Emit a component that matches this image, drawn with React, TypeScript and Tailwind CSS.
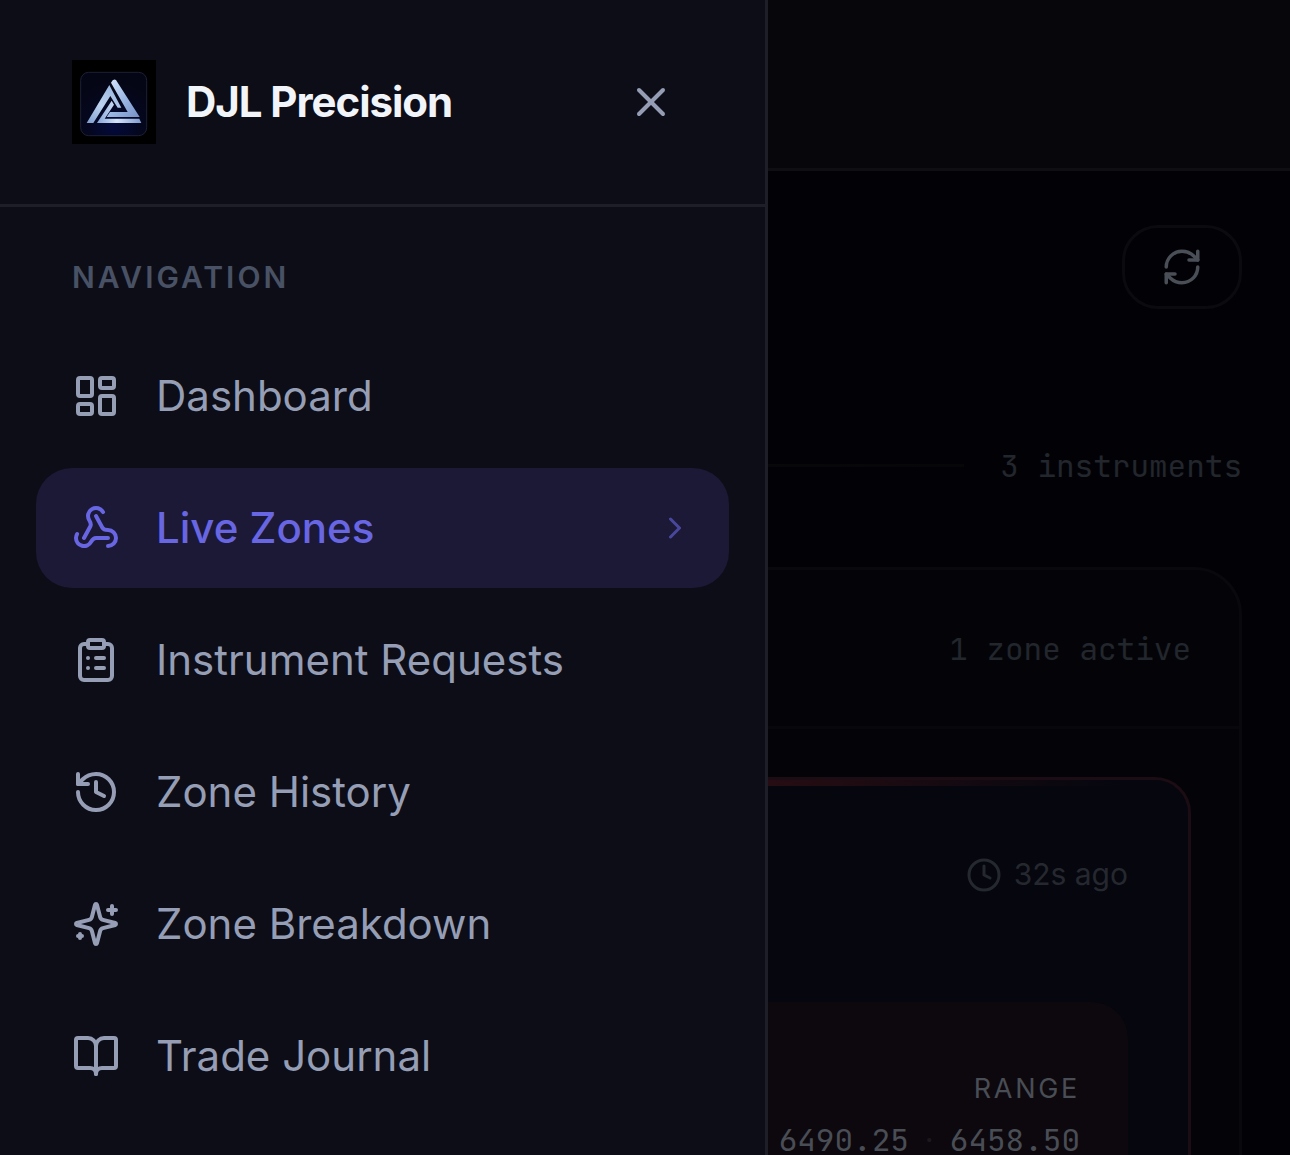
import {
  BookOpen,
  ChevronRight,
  ClipboardList,
  Clock,
  History,
  LayoutDashboard,
  RefreshCw,
  Webhook,
  X,
  type LucideIcon,
} from "lucide-react";

function LogoMark() {
  return (
    <svg viewBox="0 0 252 252" className="size-21 shrink-0" role="img" aria-label="DJL Precision logo">
      <defs>
        <radialGradient id="tile" cx="0.5" cy="0.85" r="0.7">
          <stop offset="0" stopColor="#030a3c" />
          <stop offset="0.55" stopColor="#05071f" />
          <stop offset="1" stopColor="#050615" />
        </radialGradient>
        <linearGradient id="left" x1="0" y1="1" x2="0.7" y2="0">
          <stop offset="0" stopColor="#7f9dcd" />
          <stop offset="0.5" stopColor="#bdd3f0" />
          <stop offset="1" stopColor="#9ab6e0" />
        </linearGradient>
        <linearGradient id="right" x1="0" y1="0" x2="1" y2="1">
          <stop offset="0" stopColor="#dbe9fb" />
          <stop offset="0.5" stopColor="#9dbae6" />
          <stop offset="1" stopColor="#7690c4" />
        </linearGradient>
        <linearGradient id="base" x1="0" y1="0" x2="1" y2="0">
          <stop offset="0" stopColor="#86a4d6" />
          <stop offset="0.45" stopColor="#d3e3fa" />
          <stop offset="1" stopColor="#7e9acf" />
        </linearGradient>
      </defs>
      <rect width="252" height="252" fill="#000" />
      <rect x="26" y="37" width="198" height="190" rx="24" fill="url(#tile)" stroke="#1d2036" strokeWidth="3" />
      <path d="M112 75 44 189H64L115 108 137 143H148Z" fill="url(#left)" />
      <path d="M117 68Q124 54 132 60L203 171H104L114 156H167Z" fill="url(#right)" />
      <path d="M119 122 75 189H208L202 176H98L126 134Z" fill="url(#base)" />
    </svg>
  );
}

function SparklesIcon({ className }: { className?: string }) {
  return (
    <svg
      viewBox="0 0 24 24"
      fill="none"
      stroke="currentColor"
      strokeWidth="2"
      strokeLinecap="round"
      strokeLinejoin="round"
      className={className}
      aria-hidden="true"
    >
      <path d="M9.937 15.5A2 2 0 0 0 8.5 14.063l-6.135-1.582a.5.5 0 0 1 0-.962L8.5 9.936A2 2 0 0 0 9.937 8.5l1.582-6.135a.5.5 0 0 1 .963 0L14.063 8.5A2 2 0 0 0 15.5 9.937l6.135 1.581a.5.5 0 0 1 0 .964L15.5 14.063a2 2 0 0 0-1.437 1.437l-1.582 6.135a.5.5 0 0 1-.963 0z" />
      <path d="M20 3v4M22 5h-4M4 17v2M5 18H3" />
    </svg>
  );
}

type NavItem = { label: string; icon: LucideIcon | typeof SparklesIcon; active?: boolean };

const navItems: NavItem[] = [
  { label: "Dashboard", icon: LayoutDashboard },
  { label: "Live Zones", icon: Webhook, active: true },
  { label: "Instrument Requests", icon: ClipboardList },
  { label: "Zone History", icon: History },
  { label: "Zone Breakdown", icon: SparklesIcon },
  { label: "Trade Journal", icon: BookOpen },
];

function Drawer() {
  return (
    <aside className="absolute inset-y-0 left-0 w-3xl max-w-full border-r-3 border-[#1e1e29] bg-[#0d0d18]">
      <div className="flex items-center gap-[30px] border-b-3 border-[#1e1e29] px-18 py-15">
        <LogoMark />
        <span className="text-[42px] leading-[60px] font-bold tracking-tight text-[#f1f5f9]">DJL Precision</span>
        <button type="button" aria-label="Close menu" className="ml-auto p-[18px] text-[#949db3]">
          <X className="size-12" />
        </button>
      </div>
      <nav aria-labelledby="nav-label" className="px-9 pt-12">
        <h2 id="nav-label" className="px-9 text-[30px] leading-[45px] font-semibold tracking-widest text-[#485264]">
          NAVIGATION
        </h2>
        <ul className="mt-9 flex flex-col gap-3">
          {navItems.map(({ label, icon: Icon, active }) => (
            <li key={label}>
              <a
                href="#"
                aria-current={active ? "page" : undefined}
                className={
                  active
                    ? "flex h-30 items-center gap-9 rounded-[36px] bg-[#1b1935] px-9 text-[42px] leading-[60px] font-medium text-[#6866e2]"
                    : "flex h-30 items-center gap-9 rounded-[36px] px-9 text-[42px] leading-[60px] text-[#959eb4]"
                }
              >
                <Icon className="size-12 shrink-0" />
                <span className="flex-1">{label}</span>
                {active && <ChevronRight className="size-9 opacity-60" />}
              </a>
            </li>
          ))}
        </ul>
      </nav>
    </aside>
  );
}

const mono = "font-['JetBrains_Mono','Roboto_Mono','DejaVu_Sans_Mono',monospace]";

function Zones() {
  return (
    <main>
      <div className="h-[171px] border-b-3 border-[#0f0f13] bg-[#06060b]" />
      <div className="px-12 pt-[54px]">
        <div className="flex justify-end">
          <button
            type="button"
            aria-label="Refresh"
            className="rounded-[36px] border-3 border-[#0b0b0f] px-9 py-[18px] text-[#4a4e56]"
          >
            <RefreshCw className="size-[42px]" />
          </button>
        </div>
        <div className="mt-[134px] flex items-center gap-9">
          <div className="h-[3px] flex-1 bg-linear-to-r from-[#0d0d11] to-[#060609]" />
          <span className={`${mono} text-[31px] leading-[45px] text-[#22262d]`}>3 instruments</span>
        </div>
        <section className="mt-[79px] rounded-[48px] border-3 border-[#09090d] bg-[#040408]">
          <header className="flex h-[159px] items-center justify-end border-b-3 border-[#08080c] px-12">
            <span className={`${mono} text-[31px] leading-[45px] text-[#22262d]`}>1 zone active</span>
          </header>
          <div className="p-12">
            <article className="overflow-hidden rounded-[36px] border-3 border-[#1c0c13] bg-[#05060e]">
              <div className="h-1.5 bg-linear-to-r from-[#280d13] from-60% to-[#05060e] to-95%" />
              <div className="px-15 pt-[66px] pb-15">
                <div className="flex items-center justify-end gap-3 text-[30px] leading-[45px] text-[#25282f]">
                  <Clock className="size-9" />
                  <span>32s ago</span>
                </div>
                <div className="mt-[105px] rounded-[36px] bg-[#0d080d] px-12 pt-[66px] pb-12 text-right text-[#494d55]">
                  <p className="text-[27px] leading-[42px] tracking-widest">RANGE</p>
                  <p className={`${mono} mt-3 flex justify-end gap-4 text-[31px] leading-9`}>
                    <span>6490.25</span>
                    <span className="font-['Inter',sans-serif] text-[#1b181e]">·</span>
                    <span>6458.50</span>
                  </p>
                </div>
              </div>
            </article>
          </div>
        </section>
      </div>
    </main>
  );
}

export default function App() {
  return (
    <div className="relative h-screen overflow-hidden bg-[#020206] font-['Inter',sans-serif]">
      <Zones />
      <Drawer />
    </div>
  );
}
